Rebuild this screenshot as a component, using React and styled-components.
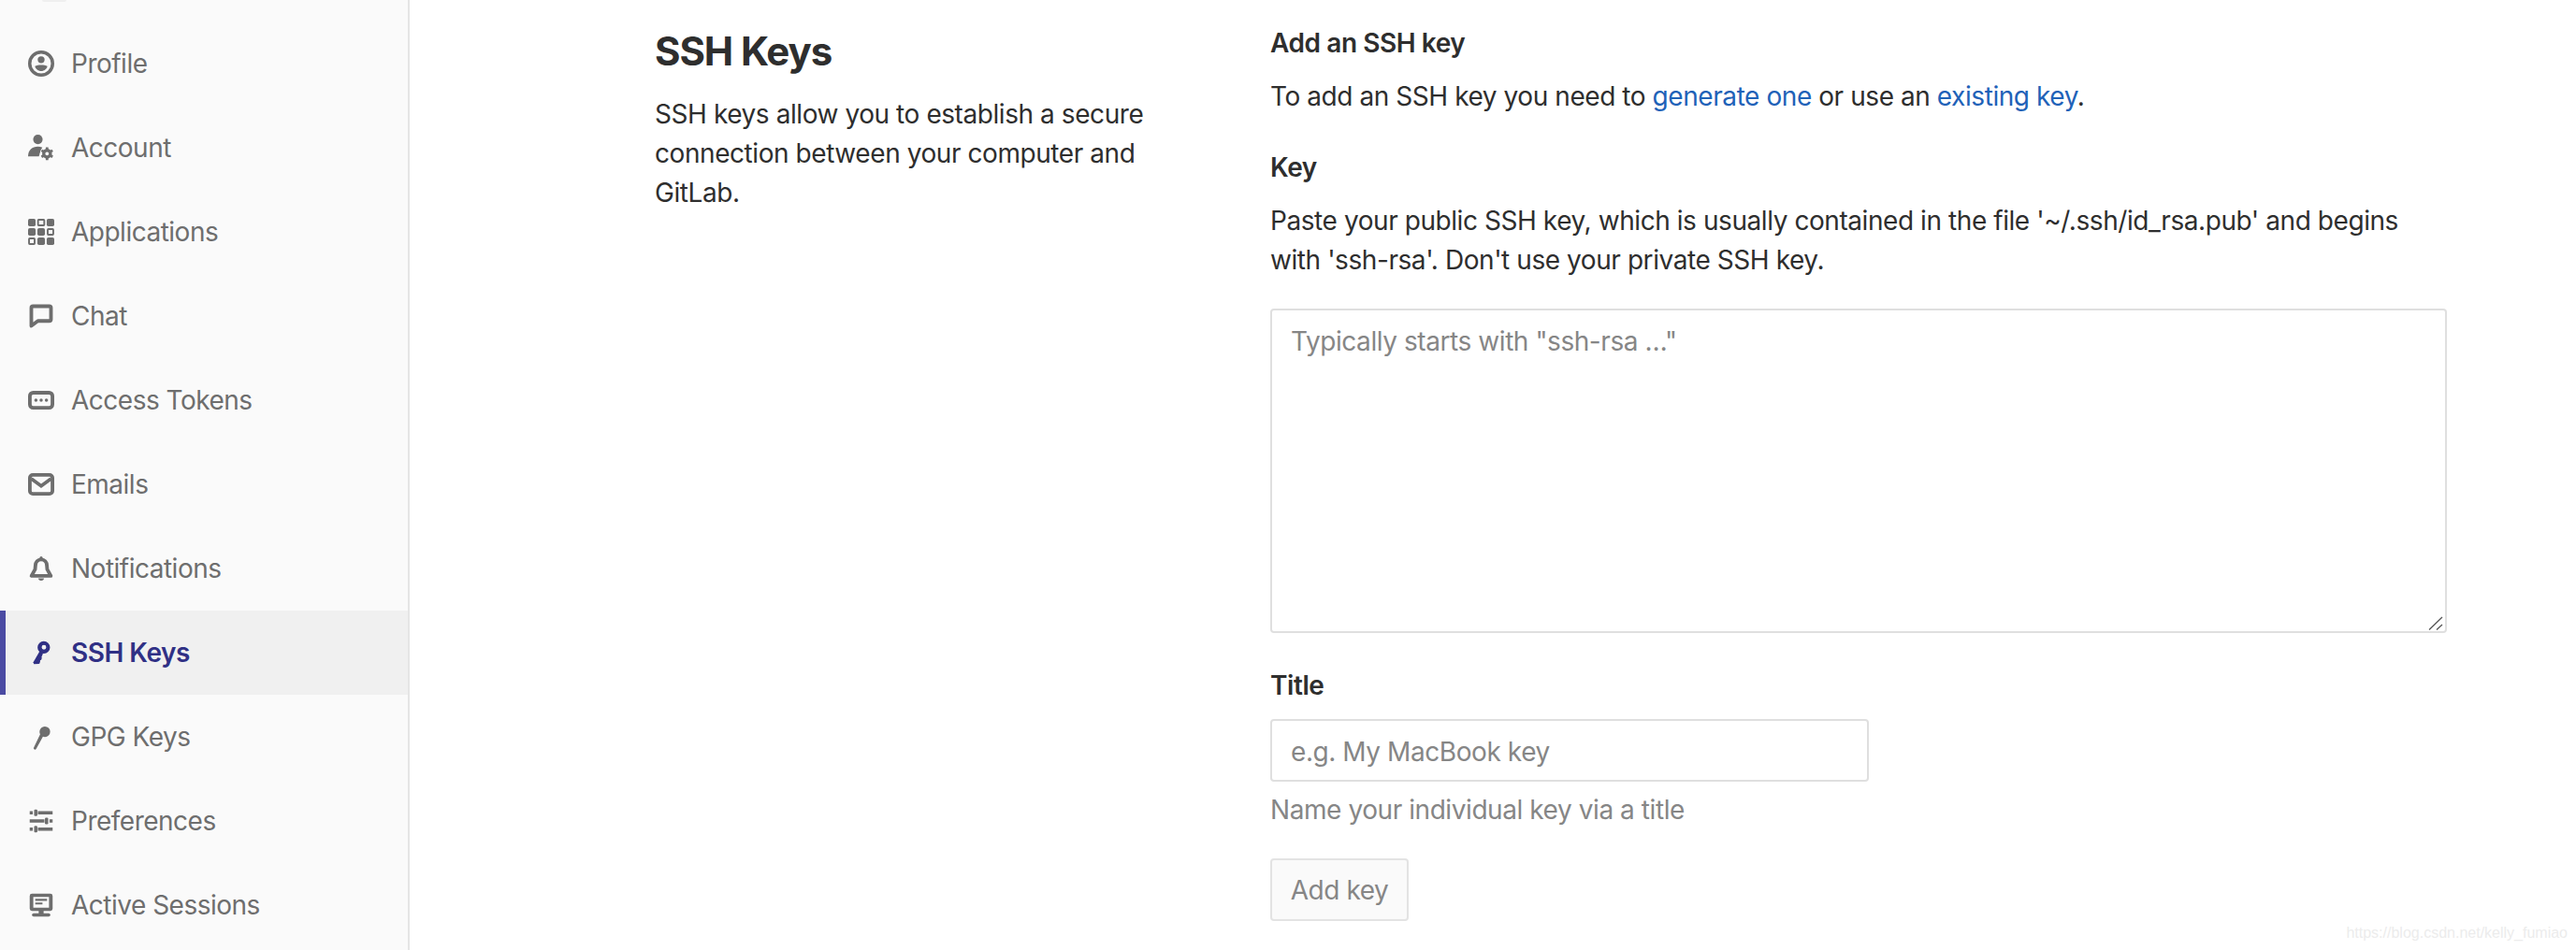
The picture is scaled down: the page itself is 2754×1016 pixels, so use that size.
import React from "react";
import styled, { createGlobalStyle } from "styled-components";

const Global = createGlobalStyle`
  html, body { margin: 0; padding: 0; background: #fff; }
  body { font-family: Inter, "Liberation Sans", sans-serif; color: #2e2e2e; overflow: hidden; }
  * { box-sizing: border-box; }
`;

const Page = styled.div`
  display: flex;
  width: 2754px;
  height: 1016px;
  overflow: hidden;
  position: relative;
`;
const Sidebar = styled.nav`
  width: 438px;
  flex: none;
  background: #fafafa;
  border-right: 2px solid #e5e5e5;
  display: flex;
  flex-direction: column;
`;
const AvatarEdge = styled.div`
  width: 26px;
  height: 2px;
  margin: 0 0 21px 45px;
  background: #efefef;
  border-radius: 0 0 13px 13px;
`;
const NavItem = styled.a`
  height: 90px;
  flex: none;
  display: flex;
  align-items: center;
  gap: 18px;
  padding-left: 30px;
  font-size: 28px;
  font-weight: ${(p) => (p.$active ? 600 : 400)};
  letter-spacing: -0.5px;
  color: ${(p) => (p.$active ? "#303085" : "#6e6e6e")};
  background: ${(p) => (p.$active ? "#f0f0f0" : "transparent")};
  box-shadow: ${(p) => (p.$active ? "inset 6px 0 0 #4b4ba3" : "none")};
`;
const Icon = styled.svg`
  width: 28px;
  height: 28px;
  flex: none;
  fill: currentColor;
`;
const Main = styled.main`
  flex: 1;
  display: grid;
  grid-template-columns: 658px 1258px;
  align-content: start;
  padding: 0 0 0 262px;
`;
const Intro = styled.section`
  padding-top: 31px;
`;
const Heading = styled.h1`
  margin: 0 0 22px;
  font-size: 42px;
  line-height: 48px;
  font-weight: 700;
  letter-spacing: -1.1px;
`;
const Lead = styled.p`
  margin: 0;
  width: 600px;
  font-size: 28px;
  line-height: 42px;
  letter-spacing: -0.43px;
`;
const Form = styled.form`
  display: flex;
  flex-direction: column;
  padding-top: 26px;
`;
const Label = styled.h4`
  margin: 0 0 16px;
  font-size: 28px;
  line-height: 40px;
  font-weight: 600;
  letter-spacing: -0.43px;
`;
const Text = styled.p`
  margin: 0 0 ${(p) => p.$after || 0}px;
  font-size: 28px;
  line-height: 42px;
  letter-spacing: -0.43px;
`;
const Link = styled.a`
  color: #1f62b8;
`;
const FieldWrap = styled.div`
  position: relative;
  width: 1258px;
  height: 347px;
  margin: 0 0 36px;
`;
const Field = styled.textarea`
  display: block;
  width: 100%;
  height: 100%;
  padding: 12px 20px;
  resize: none;
  border: 2px solid #dfdfdf;
  border-radius: 4px;
  font: 400 28px/42px Inter, sans-serif;
  letter-spacing: -0.43px;
  background: #fff;
  &::placeholder { color: #868686; opacity: 1; }
`;
const Grip = styled.svg`
  position: absolute;
  right: 4px;
  bottom: 3px;
  width: 16px;
  height: 15px;
`;
const TitleInput = styled.input`
  display: block;
  width: 640px;
  height: 67px;
  padding: 2px 20px 0;
  border: 2px solid #dfdfdf;
  border-radius: 4px;
  font: 400 28px Inter, sans-serif;
  letter-spacing: -0.43px;
  background: #fff;
  &::placeholder { color: #868686; opacity: 1; }
`;
const Help = styled.p`
  margin: 9px 0 31px;
  font-size: 28px;
  line-height: 42px;
  letter-spacing: -0.43px;
  color: #868686;
`;
const Button = styled.button`
  width: 148px;
  height: 67px;
  padding: 0;
  background: #fafafa;
  border: 2px solid #e3e3e3;
  border-radius: 4px;
  font: 400 28px Inter, sans-serif;
  letter-spacing: -0.43px;
  color: #868686;
`;
const Watermark = styled.span`
  position: absolute;
  right: 9px;
  bottom: 9px;
  font: 400 16px "Liberation Sans", Arial, sans-serif;
  color: #ececec;
`;

const Gear = () => (
  <g>
    <circle cx="11.6" cy="11.6" r="4.4" fill="#fafafa" />
    <path
      fillRule="evenodd"
      d="M11.6 8.6a3 3 0 1 1 0 6 3 3 0 0 1 0-6zm0 1.9a1.1 1.1 0 1 0 0 2.2 1.1 1.1 0 0 0 0-2.2z"
    />
    <path d="M10.8 7.7h1.6v1.4h-1.6zM10.8 14.1h1.6v1.4h-1.6z" />
    <path d="M10.8 7.7h1.6v1.4h-1.6zM10.8 14.1h1.6v1.4h-1.6z" transform="rotate(60 11.6 11.6)" />
    <path d="M10.8 7.7h1.6v1.4h-1.6zM10.8 14.1h1.6v1.4h-1.6z" transform="rotate(120 11.6 11.6)" />
  </g>
);

const icons = {
  profile: (
    <>
      <path fillRule="evenodd" d="M8 0a8 8 0 1 1 0 16A8 8 0 0 1 8 0zm0 2a6 6 0 1 0 0 12A6 6 0 0 0 8 2z" />
      <circle cx="8" cy="5.6" r="2.1" />
      <path d="M4.2 9.6c1-.6 2.3-.8 3.8-.8s2.8.2 3.8.8c-.4 1.8-2 3-3.8 3s-3.4-1.2-3.8-3z" />
    </>
  ),
  account: (
    <>
      <circle cx="6" cy="2.9" r="2.9" />
      <path d="M0 13.3c0-3.800 2.500-6 6-6 1 0 1.900.2 2.700.5L6.600 13.300z" />
      <Gear />
    </>
  ),
  apps: (
    <>
      <rect x="0" y="0" width="4.6" height="4.6" rx="1" />
      <rect x="6.1" y=".6" width="3.8" height="3.4" rx=".4" fill="none" stroke="currentColor" strokeWidth="1.1" />
      <rect x="11.4" y="0" width="4.6" height="4.6" rx="1" />
      <rect x="0" y="5.7" width="4.6" height="4.6" rx="1" />
      <rect x="5.7" y="5.7" width="4.6" height="4.6" rx="1" />
      <rect x="12" y="6.3" width="3.4" height="3.4" rx=".4" fill="none" stroke="currentColor" strokeWidth="1.1" />
      <rect x=".6" y="12" width="3.4" height="3.4" rx=".4" fill="none" stroke="currentColor" strokeWidth="1.1" />
      <rect x="5.7" y="11.4" width="4.6" height="4.6" rx="1" />
      <rect x="11.4" y="11.4" width="4.6" height="4.6" rx="1" />
    </>
  ),
  chat: (
    <path
      d="M3 2h10a1 1 0 0 1 1 1v7a1 1 0 0 1-1 1H6l-4 3V3a1 1 0 0 1 1-1z"
      fill="none"
      stroke="currentColor"
      strokeWidth="2.2"
      strokeLinejoin="round"
    />
  ),
  token: (
    <>
      <rect x="1.1" y="3.4" width="13.8" height="9.2" rx="2" fill="none" stroke="currentColor" strokeWidth="2.2" />
      <circle cx="4.8" cy="8" r="1" />
      <circle cx="8" cy="8" r="1" />
      <circle cx="11.2" cy="8" r="1" />
    </>
  ),
  email: (
    <>
      <rect x="1.1" y="2.2" width="13.8" height="11.600" rx="1.8" fill="none" stroke="currentColor" strokeWidth="2.2" />
      <path d="M2 4.6 8 9l6-4.400" fill="none" stroke="currentColor" strokeWidth="2.100" />
    </>
  ),
  bell: (
    <>
      <path
        d="M8 2.500c-2.200 0-3.400 1.700-3.500 3.700l-.2 2.300L2.100 12.500h11.800l-2.200-4-.2-2.300C11.400 4.200 10.200 2.500 8 2.500z"
        fill="none"
        stroke="currentColor"
        strokeWidth="2.200"
        strokeLinejoin="round"
      />
      <circle cx="8" cy="1.400" r=".9" />
      <path d="M6.300 14h3.400a1.700 1.400 0 0 1-3.400 0z" />
    </>
  ),
  sshKey: (
    <>
      <path
        fillRule="evenodd"
        d="M9.600 1a3.800 3.800 0 1 1 0 7.600 3.800 3.800 0 0 1 0-7.600zm.1 2.300a1.400 1.400 0 1 0 0 2.800 1.400 1.400 0 0 0 0-2.800z"
      />
      <path d="M7 7.300 9.200 8.300 6.600 14.800l-3 .2-.4-1.200z" />
      <path d="M5.700 10.500l2.800.5-.5 1.500-3-.6zM5 12.900l2.400.2-.4 1.600-2.700-.2z" />
    </>
  ),
  gpgKey: (
    <path d="M10.300 1.700a3.200 3.200 0 1 1 0 6.400 3.200 3.200 0 0 1-1.200-.2L5 15.300c-.3.500-.7.700-1.100.4-.5-.2-.6-.6-.4-1.100L7.400 6.400a3.200 3.200 0 0 1 2.900-4.700z" />
  ),
  prefs: (
    <>
      <path d="M1 2h1.900v2H1zM6 2h9v2H6zM1 7h9v2H1zM13.100 7H15v2h-1.900zM1 12h1.900v2H1zM6 12h9v2H6z" />
      <rect x="3.700" y="1" width="2" height="4" rx=".7" />
      <rect x="10.300" y="6" width="2" height="4" rx=".7" />
      <rect x="3.700" y="11" width="2" height="4" rx=".7" />
    </>
  ),
  sessions: (
    <>
      <path
        fillRule="evenodd"
        d="M2.400 1h11.200A1.400 1.400 0 0 1 15 2.400v7.700a1.400 1.400 0 0 1-1.400 1.400H2.400A1.400 1.400 0 0 1 1 10.100V2.400A1.400 1.400 0 0 1 2.400 1zm.8 2v6.500h9.600V3z"
      />
      <path d="M4.400 4.200h7.200v1.200H4.400zM4.400 6.400h4.400v1.200H4.400zM6.500 11h3v2.200h-3z" />
      <rect x="2.400" y="13" width="11.200" height="2" rx="1" />
    </>
  ),
};

const nav = [
  ["Profile", "profile"],
  ["Account", "account"],
  ["Applications", "apps"],
  ["Chat", "chat"],
  ["Access Tokens", "token"],
  ["Emails", "email"],
  ["Notifications", "bell"],
  ["SSH Keys", "sshKey", true],
  ["GPG Keys", "gpgKey"],
  ["Preferences", "prefs"],
  ["Active Sessions", "sessions"],
];

export default function App() {
  return (
    <Page>
      <Global />
      <Sidebar>
        <AvatarEdge />
        {nav.map(([label, icon, active]) => (
          <NavItem key={label} $active={active}>
            <Icon viewBox="0 0 16 16">{icons[icon]}</Icon>
            {label}
          </NavItem>
        ))}
      </Sidebar>
      <Main>
        <Intro>
          <Heading>SSH Keys</Heading>
          <Lead>SSH keys allow you to establish a secure connection between your computer and GitLab.</Lead>
        </Intro>
        <Form>
          <Label>Add an SSH key</Label>
          <Text $after={35}>
            To add an SSH key you need to <Link>generate one</Link> or use an <Link>existing key</Link>.
          </Text>
          <Label>Key</Label>
          <Text $after={31}>
            Paste your public SSH key, which is usually contained in the file '~/.ssh/id_rsa.pub' and begins
            <br />
            with 'ssh-rsa'. Don't use your private SSH key.
          </Text>
          <FieldWrap>
            <Field placeholder={'Typically starts with "ssh-rsa …"'} />
            <Grip viewBox="0 0 16 15">
              <path d="M1 14.500 15 1M9 14.500 15 9" fill="none" stroke="#555" strokeWidth="1.300" />
            </Grip>
          </FieldWrap>
          <Label>Title</Label>
          <TitleInput placeholder="e.g. My MacBook key" />
          <Help>Name your individual key via a title</Help>
          <div>
            <Button type="button">Add key</Button>
          </div>
        </Form>
      </Main>
      <Watermark>https://blog.csdn.net/kelly_fumiao</Watermark>
    </Page>
  );
}
